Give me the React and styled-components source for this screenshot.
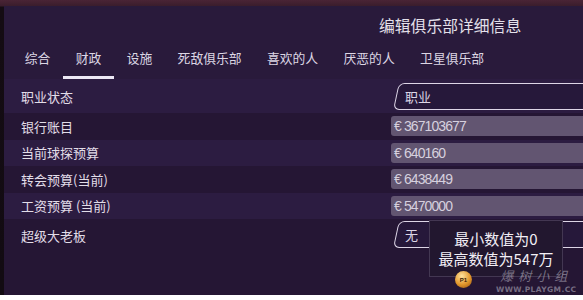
import styled, { createGlobalStyle } from 'styled-components';

const GlobalStyle = createGlobalStyle`
  html, body {
    margin: 0;
    background: #ffffff;
  }
  body {
    font-family: 'Noto Sans CJK SC', 'Noto Sans', sans-serif;
  }
`;

const Stage = styled.div`
  position: relative;
  height: 295px;
  overflow: hidden;
  padding: 6px 0 0 4px;
  box-sizing: border-box;
  background: linear-gradient(180deg, #4a2435 0px, #3a1d2c 6px, #140c13 7px, #120b12 100%);
`;

const Panel = styled.div`
  height: 100%;
  background: #261736;
  display: flex;
  flex-direction: column;
`;

const Header = styled.div`
  height: 38px;
  background: #291a3b;
  display: flex;
  align-items: center;
  padding-left: 375px;
`;

const Title = styled.h1`
  margin: 0;
  font-size: 15.8px;
  font-weight: 400;
  line-height: 17px;
  color: #e4e0ea;
  white-space: nowrap;
`;

const TabBar = styled.nav`
  height: 35px;
  background: #291a3b;
  display: flex;
  padding-left: 8px;
`;

const Tab = styled.div`
  box-sizing: border-box;
  height: 35px;
  padding: 5px 12.7px 0;
  font-size: 12.8px;
  line-height: 17px;
  color: #dcd6e4;
  white-space: nowrap;
  border-bottom: 3px solid ${(p) => (p.$active ? '#ece8f4' : 'transparent')};
`;

const Row = styled.div`
  display: grid;
  grid-template-columns: 387px 1fr;
  align-items: ${(p) => (p.$top ? 'start' : 'center')};
  height: ${(p) => p.$h};
  flex: ${(p) => (p.$fill ? '1' : 'none')};
  background: ${(p) => (p.$light ? '#2c1c41' : '#251634')};
  padding-top: ${(p) => (p.$top ? '2px' : '0')};
  box-sizing: border-box;
`;

const Label = styled.div`
  padding-left: 17px;
  padding-top: ${(p) => p.$pt || '0'};
  font-size: 13px;
  line-height: 17px;
  color: #e2dde8;
  white-space: nowrap;
`;

const Dropdown = styled.div`
  position: relative;
  width: 240px;
  height: 27px;
  display: flex;
  align-items: center;
  padding-left: 14px;
  font-size: 13px;
  color: #ddd6e6;
  &::before {
    content: '';
    position: absolute;
    inset: 0 0 0 2px;
    border: 1.5px solid #ddd5e6;
    border-radius: 6px;
    transform: skewX(-12deg);
    transform-origin: bottom left;
    background: #26183a;
    z-index: 0;
  }
  span {
    position: relative;
  }
`;

const ValueBox = styled.div`
  width: 240px;
  height: 20px;
  border-radius: 3px;
  background: #625571;
  display: flex;
  align-items: center;
  padding-left: 3px;
  box-sizing: border-box;
  font-family: 'Liberation Sans', Arial, sans-serif;
  font-size: 14px;
  letter-spacing: -0.9px;
  color: #d6d0de;
  white-space: nowrap;
`;

const Tooltip = styled.div`
  position: absolute;
  left: 429px;
  top: 220px;
  width: 134px;
  height: 57px;
  box-sizing: border-box;
  background: #22172f;
  border: 1px solid #433752;
  display: flex;
  flex-direction: column;
  align-items: center;
  justify-content: center;
  gap: 4px;
  font-size: 15px;
  line-height: 16px;
  color: #f2eff6;
  z-index: 2;
`;

const Coin = styled.div`
  position: absolute;
  left: 455px;
  top: 271px;
  width: 17px;
  height: 17px;
  border-radius: 50%;
  background: radial-gradient(circle at 40% 30%, #ffe3a0, #e0952a 55%, #8a4a10);
  display: flex;
  align-items: center;
  justify-content: center;
  font-family: 'Liberation Sans', Arial, sans-serif;
  font-weight: 700;
  font-size: 6px;
  color: #3a1d05;
  z-index: 3;
`;

const Watermark = styled.div`
  position: absolute;
  left: 496px;
  top: 269px;
  display: flex;
  flex-direction: column;
  align-items: center;
  z-index: 3;
  color: rgba(190, 186, 200, 0.55);
`;

const MarkName = styled.div`
  font-family: 'Noto Sans CJK SC', serif;
  font-size: 13px;
  line-height: 13px;
  font-style: italic;
  letter-spacing: 5px;
`;

const MarkUrl = styled.div`
  margin-top: 3px;
  font-family: 'DejaVu Sans', sans-serif;
  font-weight: 700;
  font-size: 7.5px;
  line-height: 9px;
  letter-spacing: 0.4px;
`;

const tabs = ['综合', '财政', '设施', '死敌俱乐部', '喜欢的人', '厌恶的人', '卫星俱乐部'];

const money = [
  { label: '银行账目', value: '€ 367103677', h: '26.5px' },
  { label: '当前球探预算', value: '€ 640160', h: '26.5px', light: true },
  { label: '转会预算(当前)', value: '€ 6438449', h: '26.5px' },
  { label: '工资预算 (当前)', value: '€ 5470000', h: '26.5px', light: true },
];

export default function App() {
  return (
    <>
      <GlobalStyle />
      <Stage>
        <Panel>
          <Header>
            <Title>编辑俱乐部详细信息</Title>
          </Header>
          <TabBar>
            {tabs.map((t) => (
              <Tab key={t} $active={t === '财政'}>
                {t}
              </Tab>
            ))}
          </TabBar>
          <Row $h="34px" $light>
            <Label>职业状态</Label>
            <Dropdown>
              <span>职业</span>
            </Dropdown>
          </Row>
          {money.map((m) => (
            <Row key={m.label} $h={m.h} $light={m.light}>
              <Label>{m.label}</Label>
              <ValueBox>{m.value}</ValueBox>
            </Row>
          ))}
          <Row $fill $top>
            <Label $pt="5.5px">超级大老板</Label>
            <Dropdown>
              <span>无</span>
            </Dropdown>
          </Row>
        </Panel>
        <Tooltip>
          <div>最小数值为0</div>
          <div>最高数值为547万</div>
        </Tooltip>
        <Coin>P1</Coin>
        <Watermark>
          <MarkName>爆树小组</MarkName>
          <MarkUrl>WWW.PLAYGM.CC</MarkUrl>
        </Watermark>
      </Stage>
    </>
  );
}
